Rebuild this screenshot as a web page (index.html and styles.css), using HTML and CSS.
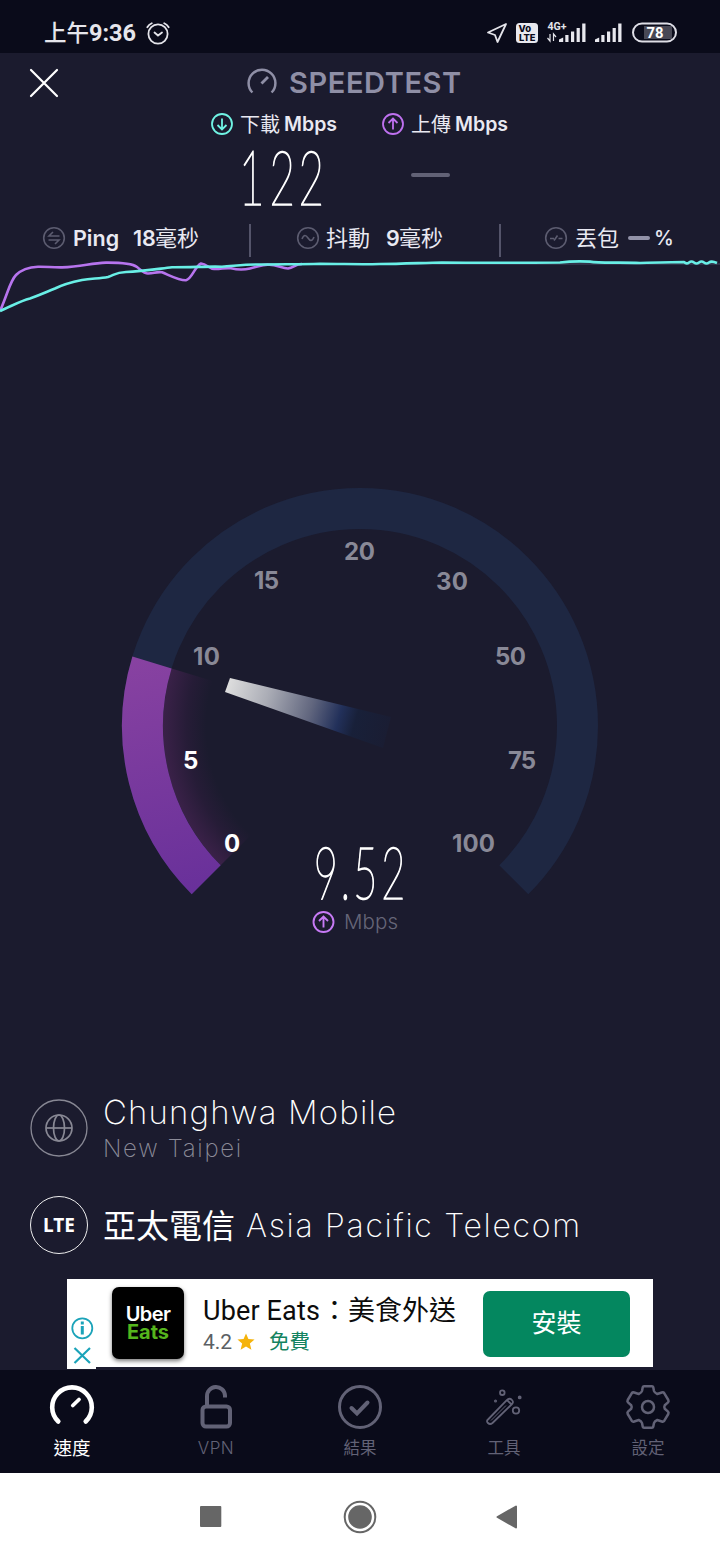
FILE: index.html
```
<!DOCTYPE html>
<html lang="zh-Hant">
<head>
<meta charset="utf-8">
<title>Speedtest</title>
<link rel="stylesheet" href="styles.css">
</head>
<body>
<div class="status">
  <span class="clock"><span class="ampm">上午</span>9:36</span>
  <svg class="alarm" width="24" height="24" viewBox="146 21 24 24" fill="none" stroke="#e4e4ea" stroke-width="1.8" stroke-linecap="round"><circle cx="158" cy="34" r="9.6"/><path d="M154.500 32.500l3.500 3 4-3M147.300 27.200q1.600-2.600 4.500-3.900M168.700 27.200q-1.600-2.600-4.500-3.900"/></svg>
  <svg class="signals" width="196" height="28" viewBox="484 18 196 28">
    <path d="M506 24L488 32.500l7 2.500 2.500 7z" fill="none" stroke="#e4e4ea" stroke-width="1.8" stroke-linejoin="round"/>
    <rect x="516" y="23" width="22" height="20" rx="3.500" fill="#e8e8ee"/>
    <text x="518.500" y="32" class="volte" textLength="12.500" lengthAdjust="spacingAndGlyphs">Vo</text>
    <text x="519" y="41.300" class="volte" textLength="16.500" lengthAdjust="spacingAndGlyphs">LTE</text>
    <text x="547.500" y="29.500" class="net" textLength="19" lengthAdjust="spacingAndGlyphs">4G+</text>
    <path d="M550 34v7l-2.500-3M553.500 41v-7l2.500 3" fill="none" stroke="#e4e4ea" stroke-width="1.200"/>
    <path d="M559 42v-2.500l4.200-2v4.500zM565.300 42v-7h3.200v7zM571 42V31.500h3.200V42zM576.600 42V28h3.200v14zM582.200 42V23.500h3.300V42zM595 42v-2.500l4.200-2v4.500zM601.300 42v-7h3.200v7zM607 42V31.500h3.200V42zM612.600 42V28h3.200v14zM618.200 42V23.500h3.300V42z" fill="#e8e8ee"/>
    <rect x="644" y="26" width="28" height="13" fill="#484855"/>
    <rect x="633" y="23.500" width="43" height="18" rx="9" fill="none" stroke="#dedee6" stroke-width="2"/>
    <text x="646.500" y="38.300" class="batt" textLength="17" lengthAdjust="spacingAndGlyphs">78</text>
  </svg>
</div>

<header class="top">
  <svg class="close" width="28" height="28" viewBox="0 0 28 28"><path d="M1 1L27 27M27 1L1 27" stroke="#fff" stroke-width="2.200" stroke-linecap="round"/></svg>
  <svg class="brand-icon" width="30" height="27" viewBox="0 0 30 27" fill="none" stroke="#8f8fa6" stroke-width="2.500"><path d="M5.400 24.500A13.400 13.400 0 1 1 24.600 24.500"/><path d="M21 9l-6.500 6.500" stroke-width="2.800"/></svg>
  <span class="brand">SPEEDTEST</span>
</header>

<section class="results">
  <div class="labels">
    <svg width="24" height="24" viewBox="-12 -12 24 24" fill="none" stroke="#70f4e4" stroke-width="1.800"><circle r="10"/><path d="M0-5.500V5M-4.500 1L0 5.500 4.500 1"/></svg>
    <span class="han">下載</span><b class="unit">Mbps</b>
    <svg class="up" width="24" height="24" viewBox="-12 -12 24 24" fill="none" stroke="#bf71f0" stroke-width="1.800"><circle r="10"/><path d="M0 5.500V-5M-4.500-1L0-5.500 4.500-1"/></svg>
    <span class="han">上傳</span><b class="unit">Mbps</b>
  </div>
  <div class="values">
    <svg width="88" height="66" viewBox="240 142 88 66"><text class="digits" font-size="77" transform="translate(243 205) scale(.57 1)" x="-7 46.500 97.500">122</text></svg>
    <i class="dash"></i>
  </div>
</section>

<section class="stats">
  <div class="stat ping">
    <svg width="24" height="24" viewBox="-12 -12 24 24" fill="none" stroke="#5c5c70" stroke-width="1.600"><circle r="10.300"/><path d="M5.500-2H-5l4-4M-5.500 2H5l-4 4"/></svg>
    <b class="name">Ping</b><b class="num">18</b><span>毫秒</span>
  </div>
  <div class="stat jitter">
    <svg width="24" height="24" viewBox="-12 -12 24 24" fill="none" stroke="#5c5c70" stroke-width="1.600"><circle r="10.300"/><path d="M-6 1C-4-4-2-3 0 0S4 4 6-1"/></svg>
    <span class="name">抖動</span><b class="num">9</b><span>毫秒</span>
  </div>
  <div class="stat loss">
    <svg width="24" height="24" viewBox="-12 -12 24 24" fill="none" stroke="#5c5c70" stroke-width="1.600"><circle r="10.300"/><path d="M-6 .5h4M-2 2.500L1.500-2.500M2.500 .5h4"/></svg>
    <span class="name">丟包</span><i></i><b class="pct">%</b>
  </div>
</section>

<svg class="graph" width="720" height="60" viewBox="0 258 720 60" fill="none" stroke-width="2.600" stroke-linejoin="round">
  <path d="M300 264H720" stroke="#4b4b62" stroke-width="1"/>
  <path d="M0 311C8 293 10 281 16 275C22 269 32 267 38 266.700C48 266.500 50 267.500 62 267.400C82 267 90 263 106 262.600C120 262.500 133 264 137 267C141 270 144 273.500 148 273.500C154 273.500 156 271.500 162 272.300C171 276 179 280.500 186 280.300C192 279 195 266 201 263.500C207 264 209 268.800 214 269C221 269.300 225 267.500 231 268.300C238 270 243 270.200 250 268.500C258 266.800 263 264 269 264.700C277 264.600 282 268.500 288 268.500C294 267.500 295 264 302 264" stroke="#b774ee"/>
  <path d="M0 311C12 306 20 301 30 298.500C40 295 44 293 55 288.500C64 284 72 282 82 280C92 278.500 100 278.500 108 277C116 274 116 272.500 126 272C142 271.500 157 269 172 267.200C192 267.300 207 266.300 222 266.700C234 266 246 264 260 264.500C280 264 300 264.500 320 263.800C350 264 360 264.500 380 264C402 264 425 262.700 442 262.500C480 263 520 262.800 560 262.500C572 261 580 261.200 590 261.600C600 263.500 620 262 640 263C655 262.500 670 262 684 262Q686.500 264.500 689 262.500T694 262.500T699 262.500T704 262.500T709 262.500T717 263" stroke="#69efe6"/>
</svg>

<svg class="gauge" width="720" height="762" viewBox="0 318 720 762">
  <defs>
    <linearGradient id="fill" x1="140" y1="656" x2="200" y2="894" gradientUnits="userSpaceOnUse"><stop offset="0" stop-color="#8842a1"/><stop offset="1" stop-color="#68309a"/></linearGradient>
    <radialGradient id="glow" cx="360" cy="726" r="197" gradientUnits="userSpaceOnUse"><stop offset=".78" stop-color="#1b1b2e"/><stop offset=".88" stop-color="#261c37"/><stop offset="1" stop-color="#3a2148"/></radialGradient>
    <linearGradient id="hand" x1="227" y1="685" x2="387" y2="732" gradientUnits="userSpaceOnUse"><stop offset="0" stop-color="#dedede"/><stop offset=".25" stop-color="#abadb6"/><stop offset=".52" stop-color="#62677f"/><stop offset=".7" stop-color="#22305a"/><stop offset=".8" stop-color="#182039"/><stop offset="1" stop-color="#1a1d33"/></linearGradient>
  </defs>
  <path d="M206.200 879.800A217.500 217.500 0 1 1 513.800 879.800" fill="none" stroke="#1e2742" stroke-width="41"/>
  <path d="M360 726L220.700 865.300A197 197 0 0 1 171.600 668.400Z" fill="url(#glow)"/>
  <path d="M206.200 879.800A217.500 217.500 0 0 1 152 662.400" fill="none" stroke="url(#fill)" stroke-width="41"/>
  <path d="M230 678L391 717 383 748 225 692Z" fill="url(#hand)"/>
  <g class="ticks">
    <text class="on" x="224" y="852" textLength="17">0</text><text class="on" x="183" y="769" textLength="15">5</text>
    <text x="193" y="665" textLength="27">10</text><text x="254" y="588.500" textLength="25">15</text><text x="344" y="560" textLength="31">20</text><text x="436" y="589.500" textLength="32">30</text><text x="495" y="665" textLength="31">50</text><text x="508" y="769" textLength="28">75</text><text x="452" y="852" textLength="43">100</text>
  </g>
  <text class="digits" font-size="73" transform="translate(316 898.500) scale(.57 1)" x="-4 43 65.500 114.500">9.52</text>
  <g fill="none" stroke="#c77af5" stroke-width="1.900" transform="translate(323.500 922)"><circle r="10"/><path d="M0 5.500V-5M-4.500-1L0-5.500 4.500-1"/></g>
  <text class="mbps" x="344" y="929" textLength="54">Mbps</text>
</svg>

<section class="providers">
  <div class="provider">
    <svg width="58" height="58" viewBox="-29 -29 58 58" fill="none" stroke="#888894"><circle r="28" stroke-width="1.300"/><g stroke-width="1.700"><circle r="13"/><ellipse rx="5.500" ry="13"/><path d="M-13 0H13"/></g></svg>
    <div><div class="isp">Chunghwa Mobile</div><div class="city">New Taipei</div></div>
  </div>
  <div class="provider">
    <span class="lte">LTE</span>
    <div class="carrier"><span class="han">亞太電信</span><span class="latin">Asia Pacific Telecom</span></div>
  </div>
</section>

<section class="ad">
  <div class="marks">
    <svg width="29" height="53" viewBox="67 1316 29 53" fill="none" stroke="#1ba3b9"><path d="M67 1316h29v53H67z" fill="#fff" stroke="none"/><circle cx="82.300" cy="1328.300" r="10" stroke-width="1.800"/><path d="M82.300 1326v8.500M82.300 1321.500v3" stroke-width="3"/><path d="M74.500 1348l15.500 15M90 1348l-15.500 15" stroke-width="2.200"/></svg>
  </div>
  <div class="app"><span>Uber</span><span class="eats">Eats</span></div>
  <div class="info">
    <div class="title"><span class="name">Uber Eats</span>：美食外送</div>
    <div class="meta"><span class="score">4.2</span><svg width="18" height="18" viewBox="-10 -10 20 20"><path d="M0-9.500L2.700-3.200 9.500-2.700 4.300 1.800 6 8.500 0 4.900-6 8.500-4.300 1.800-9.500-2.700-2.700-3.200z" fill="#f5b30b"/></svg><span class="free">免費</span></div>
  </div>
  <div class="install">安裝</div>
</section>

<nav class="tabs">
  <div class="tab active"><svg width="48" height="48" viewBox="-24 -24 48 48" fill="none" stroke="#fff" stroke-width="4.600" stroke-linecap="round"><path d="M-13.700 14.500A19.800 19.800 0 1 1 13.700 14.500"/><path d="M.8-1.500L7-7.500" stroke-width="3.800"/></svg><span>速度</span></div>
  <div class="tab"><svg width="48" height="48" viewBox="-24 -24 48 48" fill="none" stroke="#626276" stroke-width="4"><rect x="-13.500" y="-.5" width="27.500" height="20" rx="3.500"/><path d="M-9-.5V-10.500A9 9 0 0 1 9-11.500V-9.500"/></svg><span class="vpn">VPN</span></div>
  <div class="tab"><svg width="48" height="48" viewBox="-24 -24 48 48" fill="none" stroke="#626276" stroke-width="3"><circle r="20.500"/><path d="M-8.500 1L-3 6.500 7.500-4.500" stroke-width="4" stroke-linecap="round"/></svg><span>結果</span></div>
  <div class="tab"><svg width="48" height="48" viewBox="-24 -24 48 48" fill="none" stroke="#626276" stroke-width="1.800"><path d="M-16 12.500L2.800-6.800Q5.500-9.500 7.800-7.200T8-3L-11.500 16Q-14 18-16 16T-16 12.500ZM3-7l4.500 4.500"/><path d="M-13 13.500L2-1.500" stroke-width="1"/><circle cx="-1.700" cy="-14.300" r="2.300"/><circle cx="12" cy="3.500" r="3.200"/><circle cx="15.700" cy="-9.600" r="1"/><circle cx="-8.500" cy="-6" r=".6"/></svg><span>工具</span></div>
  <div class="tab"><svg width="48" height="48" viewBox="-24 -24 48 48" fill="none" stroke="#626276" stroke-width="2.500" stroke-linejoin="round"><path d="M-4-20.800H4Q5-20.800 5.200-20L6-16Q6.500-14.300 9.300-13L13.800-14.500Q15.400-15 16.300-13.700L20.300-7Q21-5.700 20-4.600L16.800-1.800Q15.800 0 16.800 1.800L20 4.600Q21 5.700 20.300 7L16.300 13.700Q15.400 15 13.800 14.500L9.300 13Q6.500 14.300 6 16L5.200 20Q5 20.800 4 20.800H-4Q-5 20.800-5.200 20L-6 16Q-6.500 14.300-9.300 13L-13.800 14.500Q-15.400 15-16.300 13.700L-20.300 7Q-21 5.700-20 4.600L-16.800 1.800Q-15.800 0-16.800-1.800L-20-4.600Q-21-5.700-20.300-7L-16.300-13.700Q-15.400-15-13.800-14.500L-9.300-13Q-6.500-14.300-6-16L-5.200-20Q-5-20.800-4-20.800Z"/><circle r="6"/></svg><span>設定</span></div>
</nav>

<div class="sysnav">
  <svg width="22" height="22" viewBox="0 0 22 22"><rect x="0" y="0" width="21.300" height="21" rx="1" fill="#666"/></svg>
  <svg width="34" height="34" viewBox="-17 -17 34 34"><circle r="15.300" fill="none" stroke="#666" stroke-width="2"/><circle r="11.800" fill="#666"/></svg>
  <svg width="22" height="26" viewBox="0 0 22 26"><path d="M1.500 13L20 2.500V23.500Z" fill="#666" stroke="#666" stroke-width="2" stroke-linejoin="round"/></svg>
</div>
</body>
</html>
```
FILE: styles.css
```
* { box-sizing: border-box; }
body { margin: 0; width: 720px; height: 1560px; overflow: hidden; background: #1b1b2e; color: #fff; font-family: Inter, "Noto Sans CJK TC", sans-serif; display: flex; flex-direction: column; }
svg { display: block; flex: none; overflow: visible; }
.status { height: 53px; flex: none; background: #0a0b1a; display: flex; align-items: flex-start; padding-left: 44px; }
.clock { width: 102px; padding-top: 19px; font: 700 23.500px/28px Roboto, "Noto Sans CJK TC", sans-serif; color: #e6e6ec; white-space: nowrap; }
.ampm { font-size: 22.500px; font-weight: 500; }
.alarm { margin-top: 21px; }
.signals { margin: 18px 0 0 314px; }
.volte { font: 800 9.500px Inter, sans-serif; fill: #0a0b1a; }
.net { font: 700 10.500px Roboto, sans-serif; fill: #e4e4ea; }
.batt { font: 700 15px Roboto, sans-serif; fill: #fff; }

.top { height: 57px; flex: none; display: flex; align-items: flex-start; padding-left: 30px; }
.close { margin-top: 16px; }
.brand-icon { margin: 15px 0 0 189px; }
.brand { margin: 12px 0 0 12px; font-size: 29px; line-height: 36px; font-weight: 600; letter-spacing: .6px; color: #8f8fa6; }

.results { height: 107px; flex: none; }
.labels { height: 28px; display: flex; align-items: center; padding-left: 210px; color: #e9e9f2; }
.labels .han { width: 40px; margin: 0 4px 0 6px; font: 400 20px/28px "Noto Sans CJK TC", sans-serif; }
.unit { width: 53px; font-size: 19.500px; font-weight: 600; }
.labels .up { margin-left: 44px; }
.values { display: flex; align-items: center; padding-left: 240px; height: 74px; }
.digits { font-family: Lato, sans-serif; font-weight: 100; fill: #fff; stroke: #fff; stroke-width: 1.700px; }
.dash { width: 39px; height: 4px; border-radius: 2px; background: #626276; margin-left: 83px; }

.stats { height: 41px; flex: none; display: grid; grid-template-columns: 251px 250px 1fr; align-items: start; color: #e9e9f2; font: 400 22px/40px "Noto Sans CJK TC", sans-serif; }
.stat { display: flex; align-items: center; height: 41px; position: relative; white-space: nowrap; }
.stat span { margin-top: -4px; }
.stat b { font-family: Inter, sans-serif; font-weight: 600; font-size: 21.500px; }
.stat .name { margin-left: 6px; }
.ping { padding-left: 42px; }
.ping .name { width: 55px; margin-left: 7px; margin-right: 5px; }
.ping .num { width: 22px; }
.jitter { padding-left: 45px; }
.jitter .name { width: 44px; margin-right: 16px; }
.jitter .num { width: 13px; }
.loss { padding-left: 43px; }
.loss .name { width: 44px; margin-left: 7px; }
.loss i { width: 22px; height: 4px; border-radius: 2px; background: #9292a8; margin: 0 4px 0 9px; }
.stat .pct { font-weight: 500; font-size: 20px; }
.ping::after, .jitter::after { content: ""; position: absolute; right: 0; top: 7px; width: 2px; height: 33px; background: #54546a; }
.graph, .gauge { flex: none; }
.ticks text { font: 700 24px Inter, sans-serif; fill: #898997; }
.ticks .on { fill: #fff; }
.mbps { font: 300 20.500px Inter, sans-serif; fill: #666678; }

.providers { height: 199px; flex: none; padding: 19px 0 0 30px; }
.provider { display: flex; align-items: flex-start; gap: 15px; height: 97px; white-space: nowrap; }
.isp { margin-top: -7px; font-size: 33px; line-height: 40px; font-weight: 250; letter-spacing: 1.150px; }
.city { margin-top: 1px; font-size: 24px; line-height: 32px; font-weight: 250; letter-spacing: 1.700px; color: #8c8c99; }
.lte { width: 58px; height: 58px; border: 1.500px solid #eee; border-radius: 50%; text-align: center; font: 700 19px/56px "Noto Sans", sans-serif; flex: none; }
.carrier { display: flex; align-items: center; height: 58px; }
.carrier .han { width: 143px; font: 400 33px/40px "Noto Sans CJK TC", sans-serif; margin-top: -2px; }
.carrier .latin { font-size: 32px; font-weight: 250; letter-spacing: 1.700px; }

.ad { height: 88px; width: 586px; margin-left: 67px; background: #fff; display: flex; flex: none; color: #111; }
.marks { width: 45px; padding-top: 37px; }
.app { width: 72px; height: 72px; margin-top: 8px; border-radius: 7px; background: #000; box-shadow: 0 2px 4px #0008; color: #fff; display: flex; flex-direction: column; align-items: center; padding-top: 18px; font: 600 20px/18px Inter, sans-serif; letter-spacing: -.6px; }
.app .eats { color: #55b51d; font-weight: 700; letter-spacing: 0; }
.info { width: 299px; padding: 15px 0 0 19px; white-space: nowrap; }
.title { display: flex; font: 400 27px/34px Roboto, "Noto Sans CJK TC", sans-serif; color: #0c0c0c; }
.title .name { width: 118px; letter-spacing: .15px; }
.meta { display: flex; align-items: center; height: 28px; font: 400 21px/28px Roboto, "Noto Sans CJK TC", sans-serif; color: #5b5f64; }
.score { width: 34px; }
.free { margin-left: 14px; color: #138360; font-size: 20.500px; }
.install { width: 147px; height: 66px; margin-top: 12px; border-radius: 7px; background: #04875f; color: #fff; text-align: center; font: 400 25px/60px "Noto Sans CJK TC", sans-serif; }

.tabs { margin-top: 3px; height: 103px; flex: none; background: #0a0b1a; display: grid; grid-template-columns: repeat(5, 1fr); }
.marks svg { position: relative; }
.tab { display: flex; flex-direction: column; align-items: center; padding-top: 13px; color: #626276; font-size: 16.500px; line-height: 24px; }
.tab span { margin-top: 5px; }
.tab.active { color: #fff; font-size: 18.500px; font-weight: 400; }
.tab .vpn { font-size: 17px; font-weight: 300; letter-spacing: .5px; }
.sysnav { height: 87px; flex: none; background: #fff; display: flex; align-items: center; padding-left: 200px; }
.sysnav svg:nth-child(2) { margin: 0 119px 0 121px; }
```
